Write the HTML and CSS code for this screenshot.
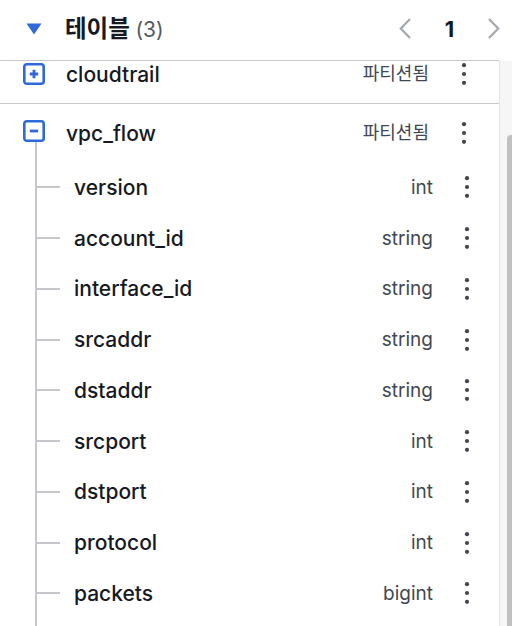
FILE: index.html
```html
<!DOCTYPE html>
<html lang="ko">
<head>
<meta charset="utf-8">
<title>테이블</title>
<link rel="stylesheet" href="styles.css">
</head>
<body>
<div class="panel">
  <header class="head">
    <div class="title-group">
      <svg class="caret" width="16" height="12" viewBox="0 0 16 12"><path d="M0.5 0.5H15.5L8 11.5Z" fill="#2f69d9"/></svg>
      <h2 class="title">테이블 <span class="count">(3)</span></h2>
    </div>
    <nav class="pager">
      <svg class="chev" width="12" height="21" viewBox="0 0 12 21"><path d="M11 1L1.8 10.5L11 20" fill="none" stroke="#a3a8ae" stroke-width="2.2"/></svg>
      <span class="page">1</span>
      <svg class="chev" width="12" height="21" viewBox="0 0 12 21"><path d="M1 1L10.2 10.5L1 20" fill="none" stroke="#a3a8ae" stroke-width="2.2"/></svg>
    </nav>
  </header>
  <div class="rule"></div>
  <div class="body">
    <div class="viewport">
      <ul class="list">
        <li class="table-row divided">
          <span class="icon-cell">
            <svg class="toggle" width="22" height="22" viewBox="0 0 22 22"><rect x="1.3" y="1.3" width="19.4" height="19.4" rx="2.5" fill="#fff" stroke="#2f69d9" stroke-width="2.6"/><path d="M6.8 11H15.2M11 6.8V15.2" stroke="#2f69d9" stroke-width="2.8"/></svg>
          </span>
          <span class="name">cloudtrail</span>
          <span class="type">파티션됨</span>
          <span class="kebab"><svg width="6" height="24" viewBox="0 0 6 24"><circle cx="3" cy="3.2" r="2.1"/><circle cx="3" cy="12" r="2.1"/><circle cx="3" cy="20.8" r="2.1"/></svg></span>
        </li>
        <li class="table-block">
          <div class="table-row">
            <span class="icon-cell open">
              <svg class="toggle" width="22" height="22" viewBox="0 0 22 22"><rect x="1.3" y="1.3" width="19.4" height="19.4" rx="2.5" fill="#fff" stroke="#2f69d9" stroke-width="2.6"/><path d="M6.8 11H15.2" stroke="#2f69d9" stroke-width="2.8"/></svg>
              <span class="stem"></span>
            </span>
            <span class="name">vpc_flow</span>
            <span class="type">파티션됨</span>
            <span class="kebab"><svg width="6" height="24" viewBox="0 0 6 24"><circle cx="3" cy="3.2" r="2.1"/><circle cx="3" cy="12" r="2.1"/><circle cx="3" cy="20.8" r="2.1"/></svg></span>
          </div>
          <ul class="columns">
            <li class="col-row"><span class="branch"></span><span class="name">version</span><span class="type">int</span><span class="kebab"><svg width="6" height="24" viewBox="0 0 6 24"><circle cx="3" cy="3.2" r="2.1"/><circle cx="3" cy="12" r="2.1"/><circle cx="3" cy="20.8" r="2.1"/></svg></span></li>
            <li class="col-row"><span class="branch"></span><span class="name">account_id</span><span class="type">string</span><span class="kebab"><svg width="6" height="24" viewBox="0 0 6 24"><circle cx="3" cy="3.2" r="2.1"/><circle cx="3" cy="12" r="2.1"/><circle cx="3" cy="20.8" r="2.1"/></svg></span></li>
            <li class="col-row"><span class="branch"></span><span class="name">interface_id</span><span class="type">string</span><span class="kebab"><svg width="6" height="24" viewBox="0 0 6 24"><circle cx="3" cy="3.2" r="2.1"/><circle cx="3" cy="12" r="2.1"/><circle cx="3" cy="20.8" r="2.1"/></svg></span></li>
            <li class="col-row"><span class="branch"></span><span class="name">srcaddr</span><span class="type">string</span><span class="kebab"><svg width="6" height="24" viewBox="0 0 6 24"><circle cx="3" cy="3.2" r="2.1"/><circle cx="3" cy="12" r="2.1"/><circle cx="3" cy="20.8" r="2.1"/></svg></span></li>
            <li class="col-row"><span class="branch"></span><span class="name">dstaddr</span><span class="type">string</span><span class="kebab"><svg width="6" height="24" viewBox="0 0 6 24"><circle cx="3" cy="3.2" r="2.1"/><circle cx="3" cy="12" r="2.1"/><circle cx="3" cy="20.8" r="2.1"/></svg></span></li>
            <li class="col-row"><span class="branch"></span><span class="name">srcport</span><span class="type">int</span><span class="kebab"><svg width="6" height="24" viewBox="0 0 6 24"><circle cx="3" cy="3.2" r="2.1"/><circle cx="3" cy="12" r="2.1"/><circle cx="3" cy="20.8" r="2.1"/></svg></span></li>
            <li class="col-row"><span class="branch"></span><span class="name">dstport</span><span class="type">int</span><span class="kebab"><svg width="6" height="24" viewBox="0 0 6 24"><circle cx="3" cy="3.2" r="2.1"/><circle cx="3" cy="12" r="2.1"/><circle cx="3" cy="20.8" r="2.1"/></svg></span></li>
            <li class="col-row"><span class="branch"></span><span class="name">protocol</span><span class="type">int</span><span class="kebab"><svg width="6" height="24" viewBox="0 0 6 24"><circle cx="3" cy="3.2" r="2.1"/><circle cx="3" cy="12" r="2.1"/><circle cx="3" cy="20.8" r="2.1"/></svg></span></li>
            <li class="col-row"><span class="branch"></span><span class="name">packets</span><span class="type">bigint</span><span class="kebab"><svg width="6" height="24" viewBox="0 0 6 24"><circle cx="3" cy="3.2" r="2.1"/><circle cx="3" cy="12" r="2.1"/><circle cx="3" cy="20.8" r="2.1"/></svg></span></li>
          </ul>
        </li>
      </ul>
    </div>
    <div class="scrollbar"><div class="thumb"></div></div>
  </div>
</div>
</body>
</html>
```

FILE: styles.css
```css
* { box-sizing: border-box; }

html, body {
  margin: 0;
  padding: 0;
  background: #ffffff;
}

body {
  font-family: "Inter", "Noto Sans CJK KR", sans-serif;
  color: #16191f;
}

.panel {
  width: 512px;
  height: 626px;
  overflow: hidden;
  display: flex;
  flex-direction: column;
}

/* header */
.head {
  height: 60px;
  flex: none;
  display: flex;
  align-items: center;
  justify-content: space-between;
  padding: 0 12px 3px 26px;
}

.title-group {
  display: flex;
  align-items: center;
}

.caret {
  display: block;
  flex: none;
}

.title {
  margin: 0 0 0 23px;
  font-size: 23.5px;
  font-weight: 700;
  line-height: 1;
  letter-spacing: 0;
}

.count {
  font-weight: 400;
  font-size: 21px;
  color: #545b64;
}

.pager {
  display: flex;
  align-items: center;
}

.chev {
  display: block;
  flex: none;
}

.page {
  width: 77px;
  text-align: center;
  font-size: 22px;
  font-weight: 700;
  line-height: 1;
}

.rule {
  flex: none;
  height: 1px;
  margin-right: 13px;
  background: #c6c6cd;
}

/* body */
.body {
  flex: 1;
  display: flex;
  min-height: 0;
}

.viewport {
  flex: 1;
  overflow: hidden;
}

.list,
.columns {
  list-style: none;
  margin: 0;
  padding: 0;
}

.list {
  margin-top: -16px;
}

.name {
  font-size: 21px;
  font-weight: 500;
  line-height: 1;
  color: #16191f;
}

.type {
  font-size: 19px;
  line-height: 1;
  color: #414750;
}

.kebab {
  width: 24px;
  display: flex;
  justify-content: center;
  fill: #414750;
}

.kebab svg {
  display: block;
}

/* table rows */
.table-row {
  height: 58px;
  display: grid;
  grid-template-columns: 66px 1fr auto 24px;
  align-items: center;
  padding-right: 23px;
}

.table-row .type {
  margin-right: 23px;
  font-size: 18px;
}

.table-row.divided {
  height: 59px;
  border-bottom: 1px solid #c6c6cd;
}

.icon-cell {
  display: flex;
  padding-left: 23px;
}

.icon-cell .toggle {
  display: block;
  margin-top: -1px;
}

.icon-cell.open {
  align-self: stretch;
  flex-direction: column;
  padding-top: 17px;
}

.stem {
  flex: 1;
  width: 2px;
  margin-left: 12px;
  background: #c6c6cd;
}

/* column rows */
.columns {
  margin-left: 35px;
  padding-bottom: 20px;
  border-left: 2px solid #c6c6cd;
}

.col-row {
  height: 50.75px;
  display: grid;
  grid-template-columns: 23px 1fr auto 24px;
  align-items: center;
  padding-right: 20px;
}

.branch {
  height: 2px;
  background: #c6c6cd;
}

.col-row .name {
  margin-left: 14px;
}

.col-row .type {
  margin-right: 22px;
}

/* fake scrollbar */
.scrollbar {
  flex: none;
  width: 13px;
  background: #f6f6f6;
  border-left: 1px solid #e3e3e3;
  padding: 74px 0 0 7px;
  display: flex;
}

.thumb {
  flex: none;
  width: 8px;
  border-radius: 4px 4px 0 0;
  background: #c1c1c1;
}
```
